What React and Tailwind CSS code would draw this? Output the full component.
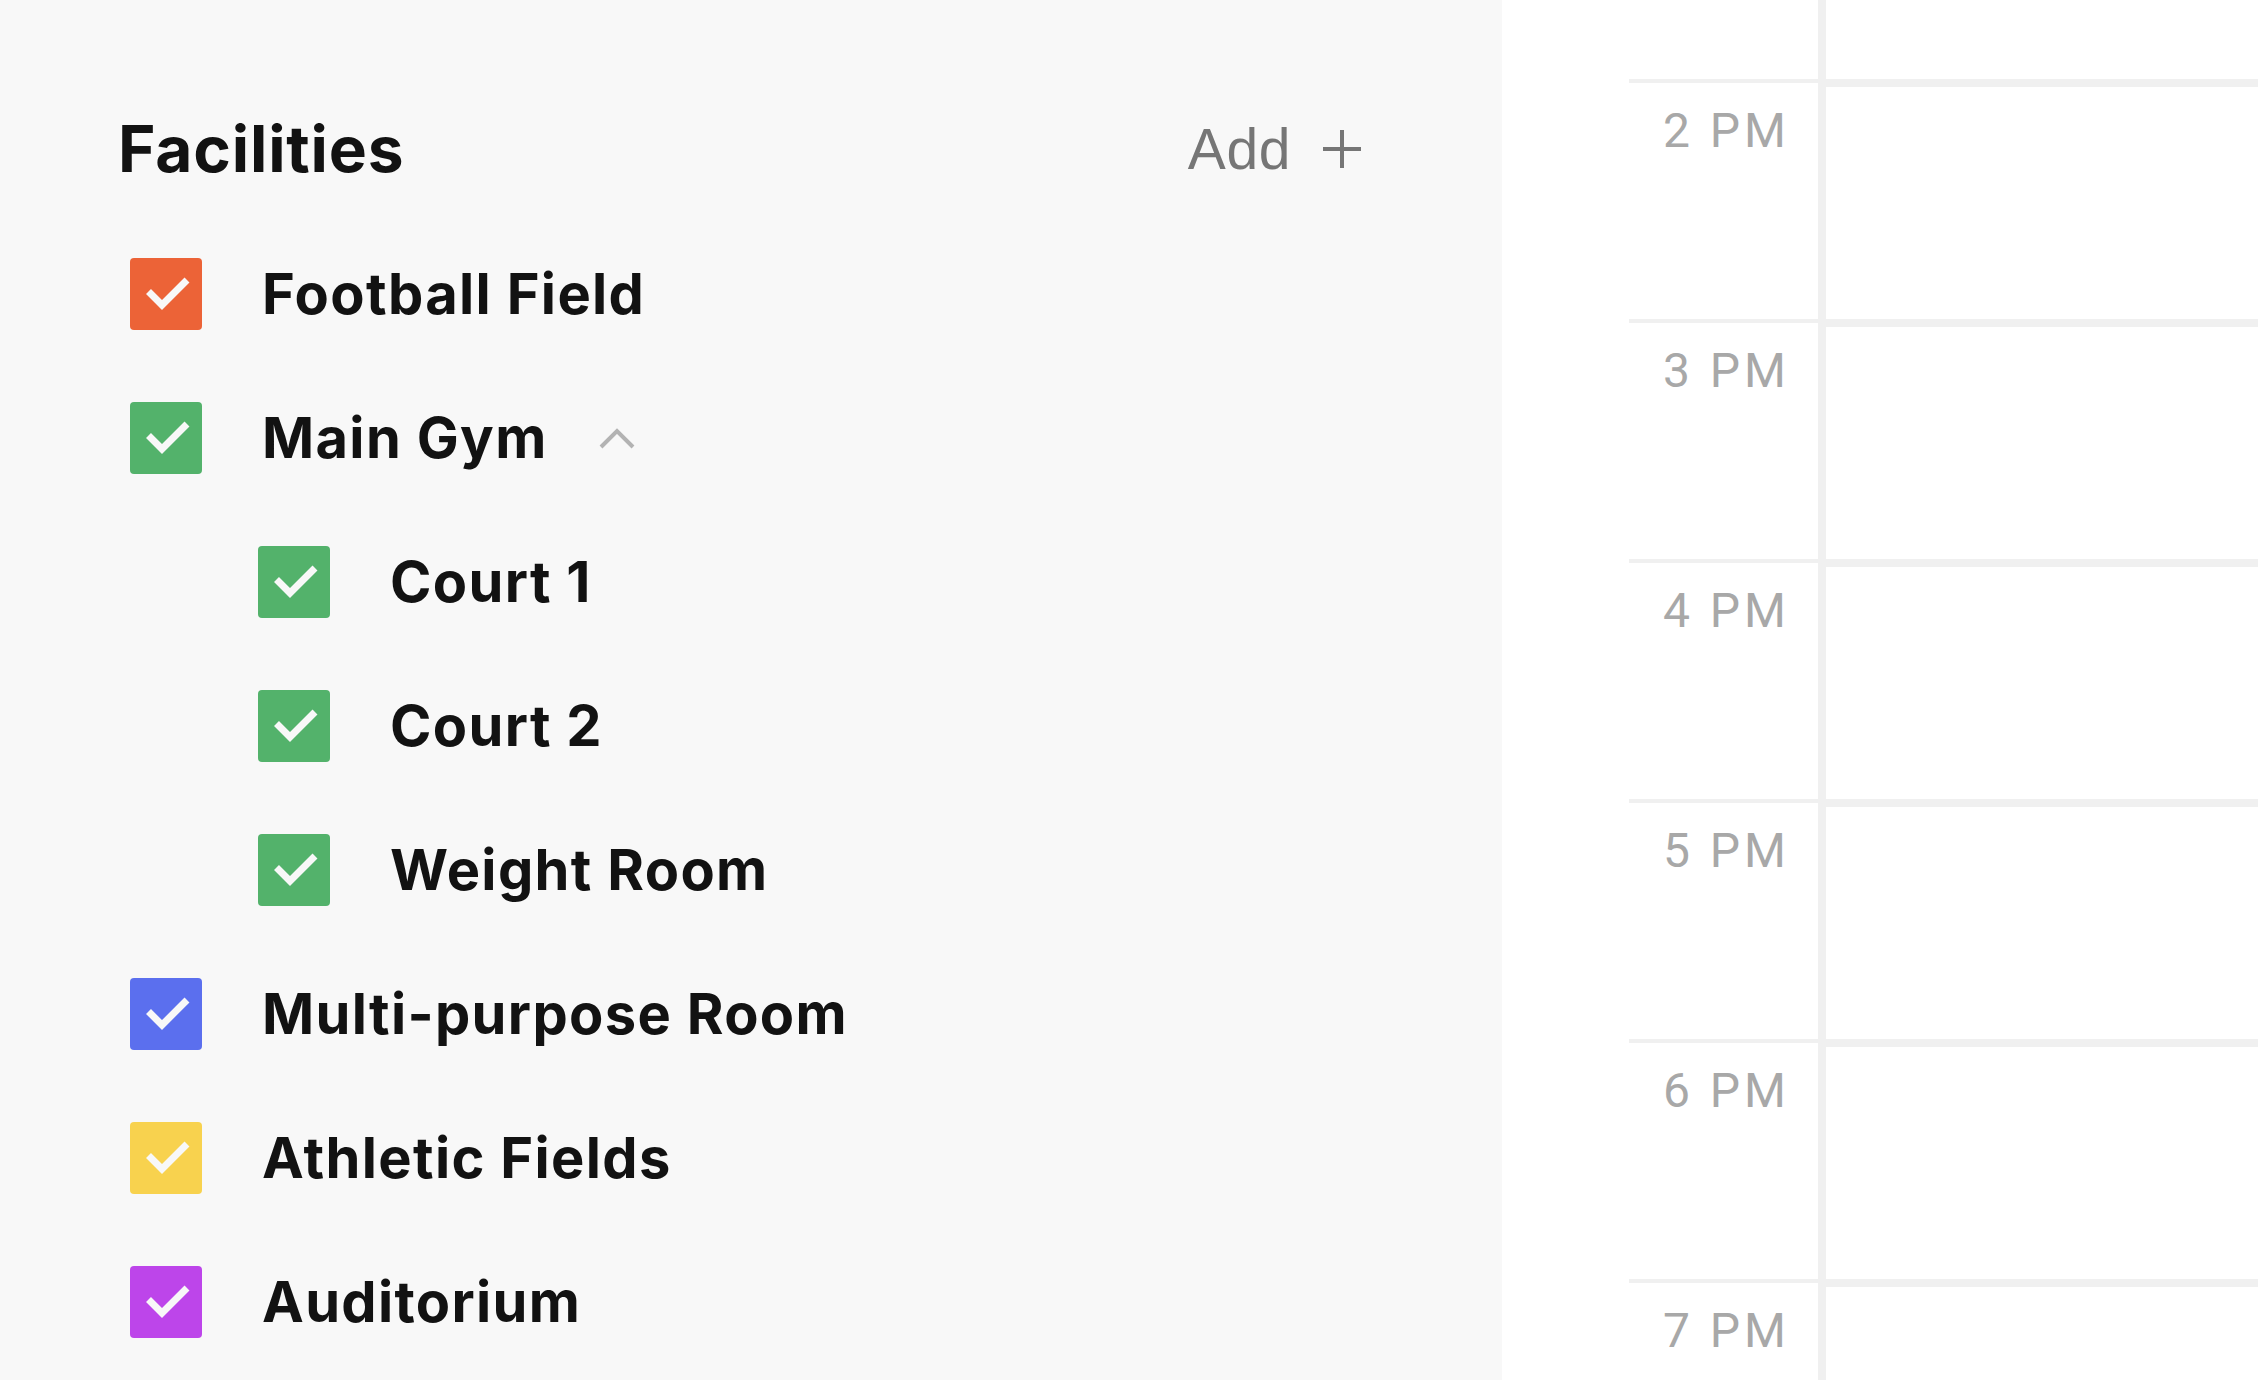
import React from 'react';

const facilities = [
  { name: 'Football Field', color: 'bg-[#ec6337]' },
  { name: 'Main Gym', color: 'bg-[#53b26b]', expanded: true },
  { name: 'Court 1', color: 'bg-[#53b26b]', sub: true },
  { name: 'Court 2', color: 'bg-[#53b26b]', sub: true },
  { name: 'Weight Room', color: 'bg-[#53b26b]', sub: true },
  { name: 'Multi-purpose Room', color: 'bg-[#5b6fee]' },
  { name: 'Athletic Fields', color: 'bg-[#f8d24e]' },
  { name: 'Auditorium', color: 'bg-[#bd45ea]' },
];

const hours = ['2 PM', '3 PM', '4 PM', '5 PM', '6 PM', '7 PM'];

// Checkbox square with a white tick
const Checkbox = ({ color }) => (
  <div className={`w-[72px] h-[72px] rounded-[4px] shrink-0 ${color}`}>
    <svg width="72" height="72" viewBox="0 0 72 72">
      <path d="M18.5 33.5 L32 47 L57 22" fill="none" stroke="#f8f8f8" strokeWidth="7" strokeLinecap="butt" strokeLinejoin="miter" />
    </svg>
  </div>
);

const FacilityRow = ({ item }) => (
  <div className={`flex items-center h-[72px] ${item.sub ? 'pl-[128px]' : ''}`}>
    <Checkbox color={item.color} />
    <span className="ml-[60px] text-[56px] leading-none font-bold text-[#121212] tracking-[0.024em]">
      {item.name}
    </span>
    {item.expanded && (
      <svg className="ml-[50px]" width="38" height="24" viewBox="0 0 38 24">
        <path d="M3 21 L19 5 L35 21" fill="none" stroke="#b3b3b3" strokeWidth="4" />
      </svg>
    )}
  </div>
);

const App = () => {
  return (
    <div className="flex w-[2258px] h-[1380px] overflow-hidden bg-white" style={{ fontFamily: 'Inter, "Noto Sans", sans-serif' }}>
      {/* Sidebar with facility list */}
      <div className="w-[1502px] shrink-0 bg-[#f8f8f8] pl-[120px] pr-[141px]">
        <div className="flex items-center justify-between mt-[117px] h-[64px]">
          <h2 className="text-[64px] leading-none font-bold text-[#121212] -ml-[2px] tracking-[0.013em]">Facilities</h2>
          <button className="flex items-center text-[#767676]" style={{ fontFamily: '"Liberation Sans", Arial, sans-serif' }}>
            <span className="text-[57px] leading-none tracking-[0.01em]">Add</span>
            <svg className="ml-[32px]" width="38" height="38" viewBox="0 0 38 38">
              <path d="M19 0 V38 M0 19 H38" stroke="#767676" strokeWidth="4" />
            </svg>
          </button>
        </div>
        <div className="flex flex-col gap-[72px] mt-[77px] ml-[10px]">
          {facilities.map((item, index) => (
            <FacilityRow key={index} item={item} />
          ))}
        </div>
      </div>

      {/* Day timeline */}
      <div className="flex-1 flex pl-[127px]">
        <div className="w-[189px] shrink-0">
          <div className="h-[79px]" />
          {hours.map((h) => (
            <div key={h} className="h-[240px] border-t-4 border-[#f0f0f0] pr-[28px] pt-[24px] text-right">
              <span className="text-[48px] leading-none text-[#a8a8a8] tracking-[4px]" style={{ fontFamily: 'Roboto, "Liberation Sans", sans-serif' }}>
                {h}
              </span>
            </div>
          ))}
        </div>
        <div className="w-[8px] shrink-0 bg-[#f0f0f0]" />
        <div className="flex-1">
          <div className="h-[79px]" />
          {hours.map((h) => (
            <div key={h} className="h-[240px] border-t-8 border-[#f0f0f0]" />
          ))}
        </div>
      </div>
    </div>
  );
};

export default App;
